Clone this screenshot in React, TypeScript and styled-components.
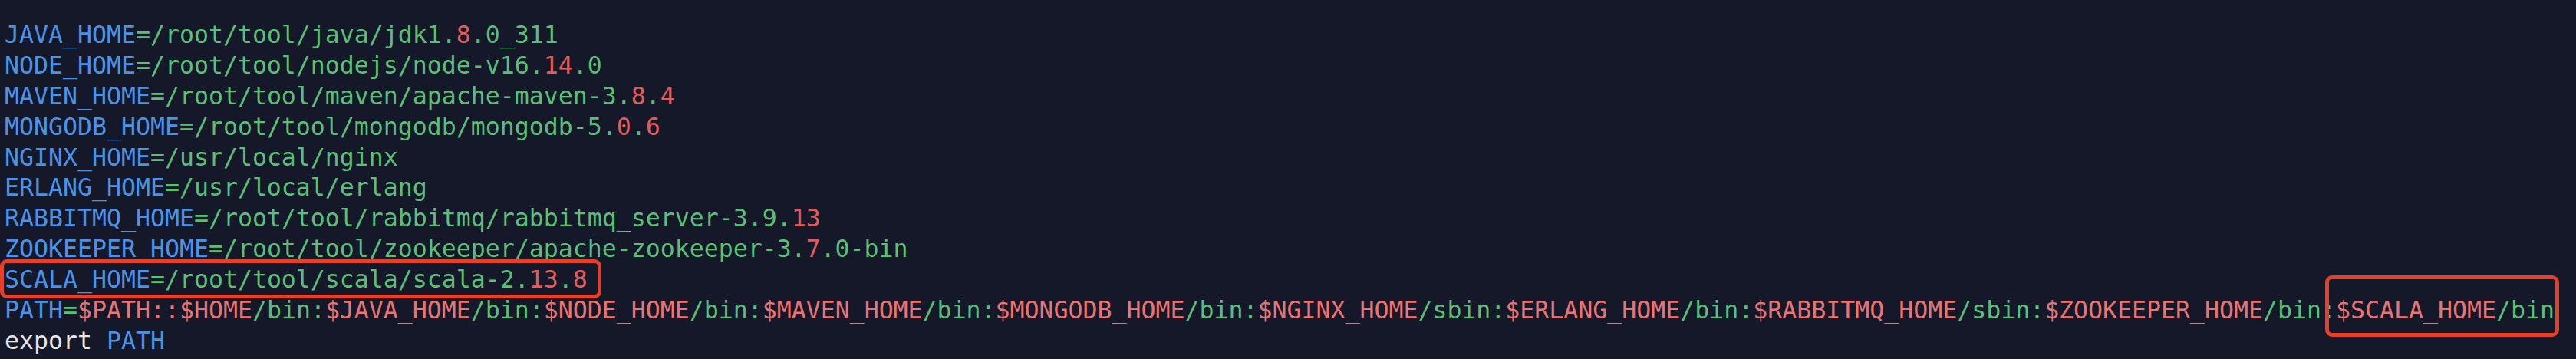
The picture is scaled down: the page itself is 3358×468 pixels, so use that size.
import React from "react";
import styled, { createGlobalStyle } from "styled-components";

const Global = createGlobalStyle`
  html, body { margin: 0; padding: 0; background: #151828; }
  #root { background: #151828; }
`;

type Kind = "key" | "str" | "num" | "var" | "plain";

const colors: Record<Kind, string> = {
  key: "#4b93e8",
  str: "#5cbf78",
  num: "#e25c5c",
  var: "#e87474",
  plain: "#e4e6ea",
};

const Terminal = styled.div`
  box-sizing: border-box;
  width: 3358px;
  height: 468px;
  padding: 26px 0 0 6px;
  background: #151828;
  font-family: "DejaVu Sans Mono", "Liberation Mono", monospace;
  font-size: 31.56px;
  line-height: 39.9px;
  overflow: hidden;
`;

const Line = styled.div`
  display: block;
  white-space: pre;
  height: 39.9px;
`;

const Tok = styled.span<{ $k: Kind }>`
  color: ${(p) => colors[p.$k]};
`;

const Highlight = styled.span<{ $t: number; $r: number; $b: number; $l: number }>`
  position: relative;
  &::after {
    content: "";
    position: absolute;
    top: ${(p) => p.$t}px;
    right: ${(p) => p.$r}px;
    bottom: ${(p) => p.$b}px;
    left: ${(p) => p.$l}px;
    border: 5px solid #e63f2a;
    border-radius: 9px;
    pointer-events: none;
  }
`;

type Seg = [Kind, string];

const K = (s: string): Seg => ["key", s];
const S = (s: string): Seg => ["str", s];
const N = (s: string): Seg => ["num", s];
const V = (s: string): Seg => ["var", s];

const renderSegs = (segs: Seg[]) =>
  segs.map(([k, t], i) => (
    <Tok key={i} $k={k}>
      {t}
    </Tok>
  ));

const lines: Seg[][] = [
  [K("JAVA_HOME"), S("=/root/tool/java/jdk1."), N("8"), S(".0_311")],
  [K("NODE_HOME"), S("=/root/tool/nodejs/node-v16."), N("14"), S(".0")],
  [K("MAVEN_HOME"), S("=/root/tool/maven/apache-maven-3."), N("8"), S("."), N("4")],
  [K("MONGODB_HOME"), S("=/root/tool/mongodb/mongodb-5."), N("0"), S("."), N("6")],
  [K("NGINX_HOME"), S("=/usr/local/nginx")],
  [K("ERLANG_HOME"), S("=/usr/local/erlang")],
  [K("RABBITMQ_HOME"), S("=/root/tool/rabbitmq/rabbitmq_server-3.9."), N("13")],
  [K("ZOOKEEPER_HOME"), S("=/root/tool/zookeeper/apache-zookeeper-3."), N("7"), S(".0-bin")],
];

const scalaLine: Seg[] = [K("SCALA_HOME"), S("=/root/tool/scala/scala-2."), N("13"), S("."), N("8")];

const pathLine: Seg[] = [
  K("PATH"),
  S("="),
  V("$PATH::$HOME"),
  S("/bin:"),
  V("$JAVA_HOME"),
  S("/bin:"),
  V("$NODE_HOME"),
  S("/bin:"),
  V("$MAVEN_HOME"),
  S("/bin:"),
  V("$MONGODB_HOME"),
  S("/bin:"),
  V("$NGINX_HOME"),
  S("/sbin:"),
  V("$ERLANG_HOME"),
  S("/bin:"),
  V("$RABBITMQ_HOME"),
  S("/sbin:"),
  V("$ZOOKEEPER_HOME"),
  S("/bin:"),
];

export default function App() {
  return (
    <>
      <Global />
      <Terminal>
        {lines.map((segs, i) => (
          <Line key={i}>{renderSegs(segs)}</Line>
        ))}
        <Line>
          <Highlight $t={-8} $r={-18} $b={-7} $l={-6}>
            {renderSegs(scalaLine)}
          </Highlight>
        </Line>
        <Line>
          {renderSegs(pathLine)}
          <Highlight $t={-27} $r={-6} $b={-17} $l={-14}>
            {renderSegs([V("$SCALA_HOME"), S("/bin")])}
          </Highlight>
        </Line>
        <Line>
          <Tok $k="plain">export </Tok>
          <Tok $k="key">PATH</Tok>
        </Line>
      </Terminal>
    </>
  );
}
